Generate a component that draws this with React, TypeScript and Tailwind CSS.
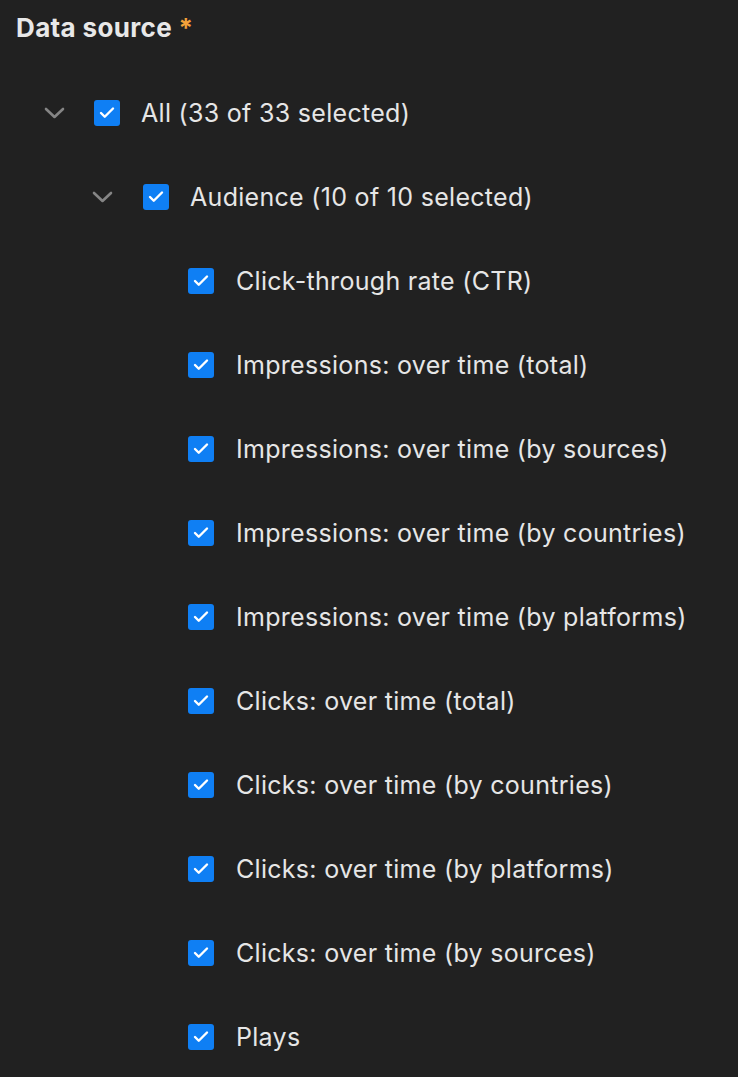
import { Check } from 'lucide-react'

interface Row { label: string; level: 1 | 2 | 3 }

const rows: Row[] = [
  { label: 'All (33 of 33 selected)', level: 1 },
  { label: 'Audience (10 of 10 selected)', level: 2 },
  { label: 'Click-through rate (CTR)', level: 3 },
  { label: 'Impressions: over time (total)', level: 3 },
  { label: 'Impressions: over time (by sources)', level: 3 },
  { label: 'Impressions: over time (by countries)', level: 3 },
  { label: 'Impressions: over time (by platforms)', level: 3 },
  { label: 'Clicks: over time (total)', level: 3 },
  { label: 'Clicks: over time (by countries)', level: 3 },
  { label: 'Clicks: over time (by platforms)', level: 3 },
  { label: 'Clicks: over time (by sources)', level: 3 },
  { label: 'Plays', level: 3 },
]

function Chevron() {
  return (
    <svg width="21" height="12" viewBox="0 0 21 12" fill="none" className="text-[#858585]">
      <path d="M2 2l8.5 8 8.5-8" stroke="currentColor" strokeWidth="2.6" strokeLinecap="round" strokeLinejoin="round" />
    </svg>
  )
}

function Box() {
  return (
    <span className="w-[26px] h-[26px] shrink-0 rounded-[3px] bg-[#0f7ff4] flex items-center justify-center">
      <Check className="w-[18px] h-[18px] text-white" strokeWidth={3.2} />
    </span>
  )
}

export default function App() {
  return (
    <div className="min-h-[1077px] w-full bg-[#212121] pl-4 pt-3 font-['Inter','Noto_Sans',sans-serif]">
      <h2 className="h-8 text-[26px] leading-8 font-bold text-[#e8e8e8] tracking-[0.35px]">
        Data source <span className="text-[#f3a23a]">*</span>
      </h2>

      <div className="mt-[27px]">
        {rows.map(r => (
          <div key={r.label} className="h-[84px] flex items-center">
            {r.level === 1 && (
              <span className="ml-[18px] w-[40px] flex justify-center shrink-0"><Chevron /></span>
            )}
            {r.level === 2 && (
              <span className="ml-[66px] w-[40px] flex justify-center shrink-0"><Chevron /></span>
            )}
            <span className={r.level === 1 ? 'ml-[20px]' : r.level === 2 ? 'ml-[21px]' : 'ml-[172px]'}>
              <Box />
            </span>
            <span className={`${r.level === 3 ? 'ml-[22px]' : 'ml-[21px]'} text-[25px] leading-none tracking-[0.3px] text-[#e6e6e6] whitespace-nowrap`}>
              {r.label}
            </span>
          </div>
        ))}
      </div>
    </div>
  )
}
